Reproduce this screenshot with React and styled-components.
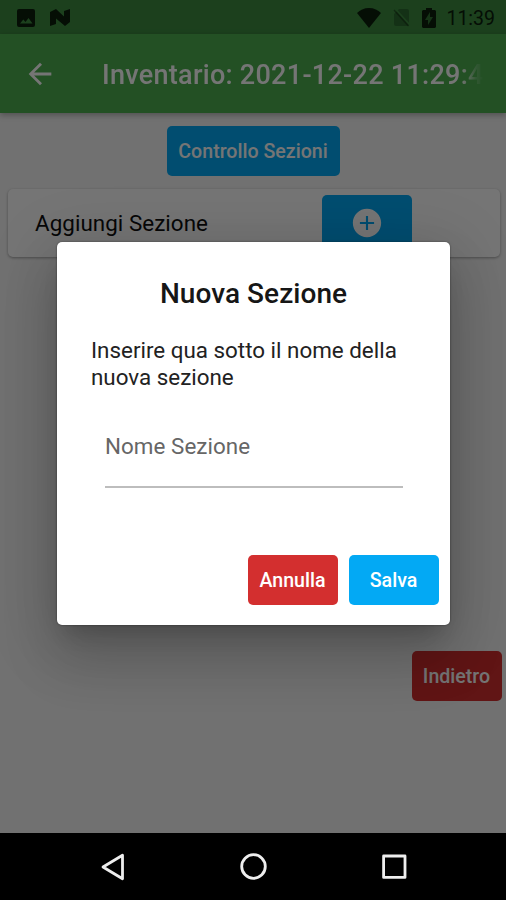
import React from "react";
import styled, { createGlobalStyle } from "styled-components";

const GlobalStyle = createGlobalStyle`
    * {
        box-sizing: border-box;
    }

    body {
        margin: 0;
        font-family: Roboto, "Liberation Sans", sans-serif;
    }

    svg {
        display: block;
        flex: none;
    }
`;

const Screen = styled.div`
    position: relative;
    display: flex;
    flex-direction: column;
    width: 506px;
    height: 900px;
    overflow: hidden;
    background-color: #f6f6f6;
`;

const StatusBar = styled.div`
    display: flex;
    align-items: center;
    height: 34px;
    padding: 1px 11px 0 17px;
    background-color: #3d8c40;
    color: #0b200c;
`;

const StatusIcons = styled.div`
    display: flex;
    align-items: center;
    gap: ${({ $gap }) => $gap}px;
`;

const Clock = styled.span`
    margin-left: 10px;
    font-size: 19.5px;
    line-height: 24px;
    padding-top: 2px;
`;

const Spacer = styled.div`
    flex: 1;
`;

const AppBar = styled.header`
    display: flex;
    align-items: center;
    height: 79px;
    padding: 0 12px 0 23px;
    background-color: #4caf50;
    box-shadow: 0 2px 6px rgba(0, 0, 0, 0.3);
    color: #ffffff;
    z-index: 1;
`;

const Title = styled.h1`
    flex: 1;
    margin: 2px 0 0 45px;
    overflow: hidden;
    white-space: nowrap;
    font-weight: 500;
    font-size: 27px;
    line-height: 36px;
    letter-spacing: 0.28px;
    mask-image: linear-gradient(to right, #000 358px, rgba(0, 0, 0, 0.5) 369px, rgba(0, 0, 0, 0.2) 374px, transparent 382px);
`;

const Content = styled.main`
    flex: 1;
    display: flex;
    flex-direction: column;
    align-items: center;
    padding: 13px 4px 0 8px;
`;

const Button = styled.button`
    display: flex;
    align-items: center;
    justify-content: center;
    width: ${({ $width }) => $width || 90}px;
    height: 50px;
    padding: 2px 1px 0 0;
    border: none;
    border-radius: 5px;
    background-color: ${({ $danger }) => ($danger ? "#d32f2f" : "#03a9f4")};
    color: #ffffff;
    font-family: inherit;
    font-weight: 500;
    font-size: 19.6px;
    line-height: 24px;
`;

const CheckButton = styled(Button)`
    margin-left: -4px;
    padding-right: 0;
`;

const Card = styled.section`
    display: flex;
    align-items: flex-start;
    align-self: stretch;
    height: 68px;
    margin: 13px 2px 0 0;
    padding: 6px 88px 0 27px;
    border-radius: 5px;
    background-color: #ffffff;
    box-shadow: 0 1px 3px rgba(0, 0, 0, 0.35);
`;

const CardLabel = styled.span`
    flex: 1;
    padding-top: 14px;
    font-size: 22.4px;
    line-height: 28px;
    letter-spacing: 0.05px;
    color: #111111;
`;

const AddButton = styled(Button)`
    height: 56px;
    padding: 0;
`;

const BackButton = styled(Button)`
    align-self: flex-end;
    margin-top: 394px;
`;

const NavBar = styled.nav`
    position: relative;
    display: flex;
    align-items: center;
    justify-content: space-between;
    height: 67px;
    padding: 0 98px 0 99px;
    background-color: #000000;
    z-index: 3;
`;

const Overlay = styled.div`
    position: absolute;
    inset: 0;
    display: flex;
    align-items: flex-start;
    justify-content: center;
    padding: 242px 56px 0 57px;
    background-color: rgba(0, 0, 0, 0.54);
    z-index: 2;
`;

const Dialog = styled.div`
    display: flex;
    flex-direction: column;
    width: 100%;
    height: 383px;
    padding: 35px 11px 20px 34px;
    border-radius: 5px;
    background-color: #ffffff;
    box-shadow: 0 15px 21px -10px rgba(0, 0, 0, 0.2), 0 34px 53px 4px rgba(0, 0, 0, 0.14),
        0 12px 64px 11px rgba(0, 0, 0, 0.12), 0 0 2px rgba(0, 0, 0, 0.5);
`;

const DialogTitle = styled.h2`
    margin: 0 23px 0 0;
    text-align: center;
    font-weight: 500;
    font-size: 28px;
    line-height: 34px;
    letter-spacing: 0.05px;
    color: #161616;
`;

const Message = styled.p`
    margin: 26px 0 0;
    width: 325px;
    font-size: 22.4px;
    line-height: 27px;
    color: #222222;
`;

const Field = styled.div`
    margin: 40px 36px 0 14px;
    height: 57px;
    padding-top: 1px;
    border-bottom: 2px solid #bdbdbd;
    font-size: 22.4px;
    line-height: 28px;
    letter-spacing: 0.05px;
    color: #666666;
`;

const Actions = styled.div`
    display: flex;
    justify-content: flex-end;
    gap: 11px;
    margin-top: auto;
`;

const PictureIcon = () => (
    <svg width="18" height="18" viewBox="0 0 18 18">
        <path
            fill="currentColor"
            fillRule="evenodd"
            d="M2 0h14a2 2 0 0 1 2 2v14a2 2 0 0 1-2 2H2a2 2 0 0 1-2-2V2a2 2 0 0 1 2-2zM3 14.5h12.5l-4-5.5-3 4-2.2-2.6z"
        />
    </svg>
);

const NougatIcon = () => (
    <svg width="20" height="17" viewBox="0 0 20 17">
        <path fill="currentColor" d="M0 3 6 0l8 7.5V2l6-2v13l-5 4-9-7.5V15l-6 2z" />
    </svg>
);

const WifiIcon = () => (
    <svg width="24" height="20" viewBox="0 0 24 20">
        <path fill="currentColor" d="M12 20 0 5C3 2 7 0 12 0s9 2 12 5z" />
    </svg>
);

const NoSimIcon = () => (
    <svg width="17" height="19" viewBox="0 0 17 19">
        <path fill="currentColor" fillOpacity="0.3" d="M6 1h8a2 2 0 0 1 2 2v13a2 2 0 0 1-2 2H3a2 2 0 0 1-2-2V6z" />
        <path stroke="#3d8c40" strokeWidth="1.6" d="m2.5 1 14 15.5" />
        <path stroke="currentColor" strokeOpacity="0.45" strokeWidth="1.4" d="m1 2 14.5 16" />
    </svg>
);

const BatteryIcon = () => (
    <svg width="14" height="20" viewBox="0 0 14 20">
        <path fill="currentColor" d="M1 2h3V0h6v2h3l1 1v16l-1 1H1l-1-1V3z" />
        <path fill="#3d8c40" fillOpacity="0.75" d="m8 4-5 8h3v5l5-8H8z" />
    </svg>
);

const BackArrow = () => (
    <svg width="34" height="34" viewBox="0 0 24 24">
        <path fill="currentColor" d="M20 11H7.83l5.59-5.59L12 4l-8 8 8 8 1.41-1.41L7.83 13H20z" />
    </svg>
);

const PlusCircle = () => (
    <svg width="34" height="34" viewBox="0 0 24 24">
        <path
            fill="currentColor"
            d="M12 2C6.48 2 2 6.48 2 12s4.48 10 10 10 10-4.48 10-10S17.52 2 12 2zm5 10.75h-4.25V17h-1.5v-4.25H7v-1.5h4.25V7h1.5v4.25H17z"
        />
    </svg>
);

const NavIcon = ({ children }) => (
    <svg
        width="28"
        height="28"
        viewBox="0 0 28 28"
        fill="none"
        stroke="#eeeeee"
        strokeWidth="2.8"
        strokeLinejoin="round"
    >
        {children}
    </svg>
);

const App = () => {
    return (
        <Screen>
            <GlobalStyle />
            <StatusBar>
                <StatusIcons $gap={15}>
                    <PictureIcon />
                    <NougatIcon />
                </StatusIcons>
                <Spacer />
                <StatusIcons $gap={12}>
                    <WifiIcon />
                    <NoSimIcon />
                    <BatteryIcon />
                </StatusIcons>
                <Clock>11:39</Clock>
            </StatusBar>
            <AppBar>
                <BackArrow />
                <Title>Inventario: 2021-12-22 11:29:4</Title>
            </AppBar>
            <Content>
                <CheckButton $width={173}>Controllo Sezioni</CheckButton>
                <Card>
                    <CardLabel>Aggiungi Sezione</CardLabel>
                    <AddButton>
                        <PlusCircle />
                    </AddButton>
                </Card>
                <BackButton $danger>Indietro</BackButton>
            </Content>
            <NavBar>
                <NavIcon>
                    <path d="M4 14 23.5 2.2v23.6z" />
                </NavIcon>
                <NavIcon>
                    <circle cx="13.5" cy="13.5" r="11.8" />
                </NavIcon>
                <NavIcon>
                    <rect x="3.6" y="3" width="21.4" height="21.4" />
                </NavIcon>
            </NavBar>
            <Overlay>
                <Dialog role="dialog">
                    <DialogTitle>Nuova Sezione</DialogTitle>
                    <Message>Inserire qua sotto il nome della nuova sezione</Message>
                    <Field>Nome Sezione</Field>
                    <Actions>
                        <Button $danger>Annulla</Button>
                        <Button>Salva</Button>
                    </Actions>
                </Dialog>
            </Overlay>
        </Screen>
    );
};

export default App;
